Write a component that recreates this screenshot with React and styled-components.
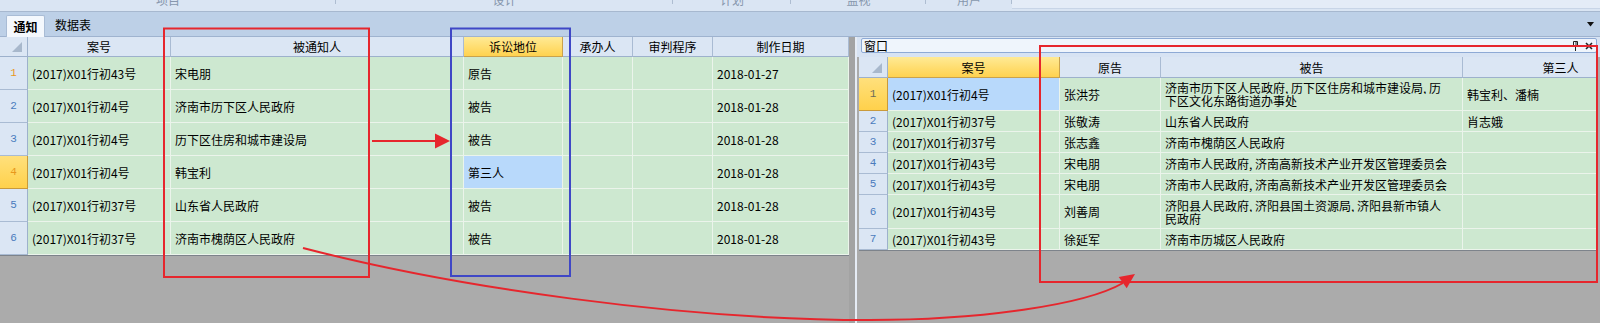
import React from 'react'
import styled, { createGlobalStyle } from 'styled-components'

const GlobalStyle = createGlobalStyle`
  html, body { margin: 0; padding: 0; background: #ababab; }
  body {
    font-family: "Noto Sans CJK SC", "Noto Sans", sans-serif;
    font-size: 12px;
    color: #000;
  }
`

const ribbonGroups = [
  { label: '项目', w: 336 },
  { label: '设计', w: 337 },
  { label: '计划', w: 118 },
  { label: '监视', w: 135 },
  { label: '用户', w: 86 },
]

const leftCols = [28, 143, 293, 99, 70, 80, 136]
const leftRowHeights = [20, 33, 33, 33, 33, 33, 33]
const leftHead = ['案号', '被通知人', '诉讼地位', '承办人', '审判程序', '制作日期']
const leftRows = [
  ['(2017)X01行初43号', '宋电朋', '原告', '', '', '2018-01-27'],
  ['(2017)X01行初4号', '济南市历下区人民政府', '被告', '', '', '2018-01-28'],
  ['(2017)X01行初4号', '历下区住房和城市建设局', '被告', '', '', '2018-01-28'],
  ['(2017)X01行初4号', '韩宝利', '第三人', '', '', '2018-01-28'],
  ['(2017)X01行初37号', '山东省人民政府', '被告', '', '', '2018-01-28'],
  ['(2017)X01行初37号', '济南市槐荫区人民政府', '被告', '', '', '2018-01-28'],
]

const rightCols = [29, 172, 101, 302, 196]
const rightHead = ['案号', '原告', '被告', '第三人']
const rightRows = [
  { h: 33, cells: ['(2017)X01行初4号', '张洪芬', ['济南市历下区人民政府, 历下区住房和城市建设局, 历', '下区文化东路街道办事处'], '韩宝利、潘楠'] },
  { h: 21, cells: ['(2017)X01行初37号', '张敬涛', '山东省人民政府', '肖志娥'] },
  { h: 21, cells: ['(2017)X01行初37号', '张志鑫', '济南市槐荫区人民政府', ''] },
  { h: 21, cells: ['(2017)X01行初43号', '宋电朋', '济南市人民政府, 济南高新技术产业开发区管理委员会', ''] },
  { h: 21, cells: ['(2017)X01行初43号', '宋电朋', '济南市人民政府, 济南高新技术产业开发区管理委员会', ''] },
  { h: 34, cells: ['(2017)X01行初43号', '刘善周', ['济阳县人民政府, 济阳县国土资源局, 济阳县新市镇人', '民政府'], ''] },
  { h: 21, cells: ['(2017)X01行初43号', '徐延军', '济南市历城区人民政府', ''] },
]

function App() {
  return (
    <Screen>
      <GlobalStyle />
      <Ribbon>
        {ribbonGroups.map(g => (
          <RibbonGroup key={g.label} $w={g.w}>
            <RibbonLabel>{g.label}</RibbonLabel>
          </RibbonGroup>
        ))}
        <RibbonRest />
      </Ribbon>

      <TabBar>
        <Tab $active>通知</Tab>
        <Tab>数据表</Tab>
        <TabMenu width="7" height="5" viewBox="0 0 7 5">
          <path d="M0 0 H7 L3.5 4.5 Z" fill="#111" />
        </TabMenu>
      </TabBar>

      <Body>
        <LeftPane>
          <Grid $cols={leftCols} $rows={leftRowHeights} $width={849}>
            <CornerCell><Corner /></CornerCell>
            {leftHead.map(h => (
              <HeadCell key={h} $active={h === '诉讼地位'}>{h}</HeadCell>
            ))}
            {leftRows.map((r, i) => (
              <React.Fragment key={i}>
                <RowHead $current={i === 3} $tone={i === 0 || i === 3 ? 'orange' : 'blue'}>{i + 1}</RowHead>
                {r.map((c, j) => (
                  <Cell key={j} $selected={i === 3 && j === 2}>{c}</Cell>
                ))}
              </React.Fragment>
            ))}
          </Grid>
        </LeftPane>

        <Splitter />

        <RightPane>
          <TitleArea>
            <TitleBox>
              <span>窗口</span>
              <TitleIcons>
                <svg width="7" height="10" viewBox="0 0 7 10">
                  <path d="M1.5 0.5 H5.5 V5 H1.5 Z" fill="none" stroke="#222" strokeWidth="1" />
                  <path d="M4 1 V5" stroke="#222" strokeWidth="1" />
                  <path d="M0 5.5 H7" stroke="#222" strokeWidth="1" />
                  <path d="M3.5 5.5 V10" stroke="#222" strokeWidth="1" />
                </svg>
                <svg width="8" height="8" viewBox="0 0 8 8">
                  <path d="M1 1 L7 7 M7 1 L1 7" stroke="#222" strokeWidth="1.6" />
                </svg>
              </TitleIcons>
            </TitleBox>
          </TitleArea>
          <GridWrap>
            <Grid $cols={rightCols} $rows={[21, ...rightRows.map(r => r.h)]} $width={738}>
              <CornerCell><Corner /></CornerCell>
              {rightHead.map(h => (
                <HeadCell key={h} $active={h === '案号'}>{h}</HeadCell>
              ))}
              {rightRows.map((r, i) => (
                <React.Fragment key={i}>
                  <RowHead $current={i === 0} $tone={i === 0 ? 'gray' : 'blue'}>{i + 1}</RowHead>
                  {r.cells.map((c, j) => (
                    <Cell key={j} $selected={i === 0 && j === 0}>
                      {Array.isArray(c) ? (
                        <Lines>{c.map(l => <Line key={l}>{l}</Line>)}</Lines>
                      ) : c}
                    </Cell>
                  ))}
                </React.Fragment>
              ))}
            </Grid>
          </GridWrap>
        </RightPane>
      </Body>

      <Marks width="1600" height="323" viewBox="0 0 1600 323">
        <rect x="164" y="28.5" width="205" height="248.5" fill="none" stroke="#e6262d" strokeWidth="2" />
        <rect x="451" y="28.5" width="119" height="247.5" fill="none" stroke="#3f47c6" strokeWidth="2" />
        <rect x="1040" y="46" width="557" height="236" fill="none" stroke="#e6262d" strokeWidth="2" />
        <line x1="372" y1="141" x2="437" y2="141" stroke="#e6262d" strokeWidth="2" />
        <polygon points="435,133.5 450,141 435,148.5" fill="#e6262d" />
        <path d="M303 248 C453 287 680 320 870 320 C980 320 1085 305 1123 283" fill="none" stroke="#e6262d" strokeWidth="2" />
        <polygon points="1135,274 1126.7,288.3 1118.7,276.9" fill="#e6262d" />
      </Marks>
    </Screen>
  )
}

const Screen = styled.div`
  position: relative;
  width: 1600px;
  height: 323px;
  overflow: hidden;
  background: #ababab;
  display: flex;
  flex-direction: column;
`

const Ribbon = styled.div`
  height: 11px;
  flex: none;
  display: flex;
  background: #dae5f3;
  border-bottom: 1px solid #a7b8cf;
  overflow: hidden;
`

const RibbonGroup = styled.div`
  position: relative;
  width: ${p => p.$w}px;
  display: flex;
  justify-content: center;
  &::after {
    content: '';
    position: absolute;
    right: 0;
    top: 0;
    width: 1px;
    height: 4px;
    background: #aebdd1;
  }
`

const RibbonLabel = styled.span`
  margin-top: -6px;
  font-size: 12px;
  line-height: 12px;
  color: #8797ad;
`

const RibbonRest = styled.div`
  flex: 1;
  height: 8px;
  background: #e4ecf7;
  border-bottom: 1px solid #c8d5e7;
`

const TabBar = styled.div`
  height: 24px;
  flex: none;
  display: flex;
  align-items: flex-end;
  padding-left: 6px;
  background: #bdd0e7;
  border-bottom: 1px solid #9fb3cf;
`

const Tab = styled.div`
  box-sizing: border-box;
  height: ${p => (p.$active ? 22 : 20)}px;
  width: ${p => (p.$active ? '39px' : 'auto')};
  margin-left: ${p => (p.$active ? 0 : 5)}px;
  margin-bottom: ${p => (p.$active ? -1 : 2)}px;
  padding: 0 4px;
  display: flex;
  align-items: center;
  justify-content: center;
  font-weight: ${p => (p.$active ? 700 : 400)};
  background: ${p => (p.$active ? '#f4f8fd' : 'transparent')};
  border: 1px solid ${p => (p.$active ? '#a9bcd5' : 'transparent')};
  border-bottom: none;
  border-radius: 2px 2px 0 0;
`

const TabMenu = styled.svg`
  margin-left: auto;
  margin-right: 6px;
  align-self: center;
  margin-top: 1px;
`

const Body = styled.div`
  flex: 1;
  display: flex;
  min-height: 0;
`

const LeftPane = styled.div`
  width: 849px;
  flex: none;
  display: flex;
  flex-direction: column;
`

const Splitter = styled.div`
  width: 6px;
  flex: none;
  background: #a3a3a3;
  border-right: 2px solid #e6ecf5;
`

const RightPane = styled.div`
  flex: 1;
  display: flex;
  flex-direction: column;
`

const TitleArea = styled.div`
  height: 20px;
  flex: none;
  box-sizing: border-box;
  padding: 1px 3px 0 4px;
  background: #d7e3f3;
`

const TitleBox = styled.div`
  box-sizing: border-box;
  height: 15px;
  display: flex;
  align-items: center;
  padding: 0 3px 0 2px;
  background: #eff5fc;
  border: 1px solid #8eaad5;
  border-radius: 2px;
  line-height: 13px;
`

const TitleIcons = styled.div`
  margin-left: auto;
  display: flex;
  align-items: center;
  gap: 6px;
`

const GridWrap = styled.div`
  padding-left: 2px;
`

const Grid = styled.div`
  display: grid;
  grid-template-columns: ${p => p.$cols.map(c => c + 'px').join(' ')};
  grid-template-rows: ${p => p.$rows.map(r => r + 'px').join(' ')};
  width: ${p => p.$width}px;
  overflow: hidden;
  border-bottom: 1px solid #7d838b;
`

const Cell = styled.div`
  box-sizing: border-box;
  display: flex;
  align-items: center;
  padding: 0 4px;
  white-space: nowrap;
  overflow: hidden;
  line-height: 13px;
  background: ${p => (p.$selected ? '#b8d9fb' : '#cde8d0')};
  border-right: 1px solid #ebf4eb;
  border-bottom: 1px solid #ebf4eb;
`

const Lines = styled.div`
  display: flex;
  flex-direction: column;
`

const Line = styled.span`
  display: block;
  height: 13px;
  line-height: 13px;
  overflow: hidden;
`

const HeadCell = styled.div`
  box-sizing: border-box;
  display: flex;
  align-items: center;
  justify-content: center;
  white-space: nowrap;
  background: ${p => (p.$active ? 'linear-gradient(#ffea95, #ffd24f)' : '#dbe6f4')};
  border-right: 1px solid ${p => (p.$active ? '#c9a24c' : '#a9bbd3')};
  border-bottom: 1px solid ${p => (p.$active ? '#c9a24c' : '#9db1cc')};
`

const CornerCell = styled.div`
  box-sizing: border-box;
  display: flex;
  align-items: flex-end;
  justify-content: flex-end;
  padding: 0 5px 4px 0;
  background: #dbe6f4;
  border-right: 1px solid #9db1cc;
  border-bottom: 1px solid #9db1cc;
`

const Corner = styled.span`
  width: 10px;
  height: 10px;
  background: #a8b8cc;
  clip-path: polygon(100% 0, 100% 100%, 0 100%);
`

const toneColor = { blue: '#4a7bbd', orange: '#e8981c', gray: '#6e6c5a' }

const RowHead = styled.div`
  box-sizing: border-box;
  display: flex;
  align-items: center;
  justify-content: center;
  font-family: "Liberation Mono", monospace;
  font-size: 11px;
  color: ${p => toneColor[p.$tone]};
  background: ${p => (p.$current ? 'linear-gradient(#ffe07c, #ffd14b)' : '#dbe6f4')};
  border-right: 1px solid ${p => (p.$current ? '#c99a3b' : '#9db1cc')};
  border-bottom: 1px solid ${p => (p.$current ? '#c99a3b' : '#a9bbd3')};
`

const Marks = styled.svg`
  position: absolute;
  left: 0;
  top: 0;
  pointer-events: none;
`

export default App
